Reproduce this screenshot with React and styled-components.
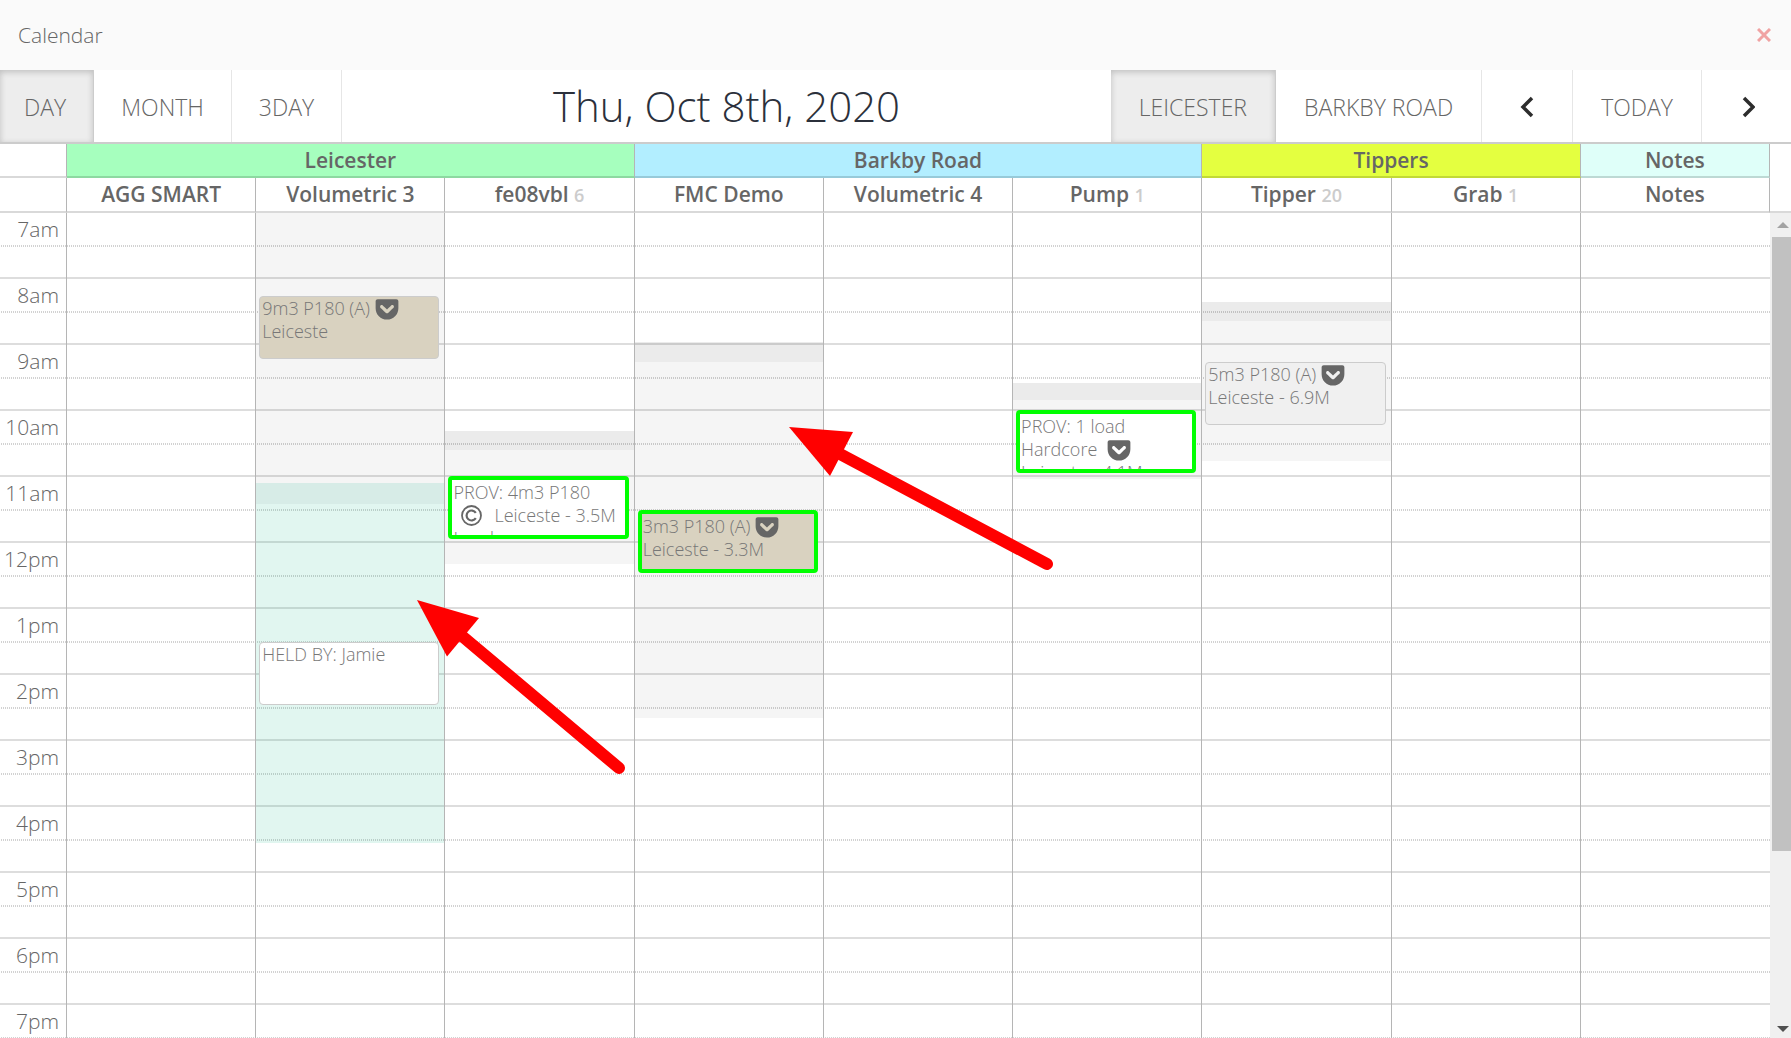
import React, { useState } from 'react';
import styled, { createGlobalStyle, css } from 'styled-components';
import { FaGetPocket } from 'react-icons/fa';

const GlobalStyle = createGlobalStyle`
  * {
    box-sizing: border-box;
  }

  body {
    margin: 0;
    background: #fff;
    color: #666;
    font-family: 'Open Sans', sans-serif;
    font-weight: 300;
  }

  button {
    font: inherit;
    color: inherit;
    cursor: pointer;
  }
`;

const Page = styled.div`
  position: relative;
  display: flex;
  flex-direction: column;
  height: 100vh;
  overflow: hidden;
`;

const TitleBar = styled.header`
  display: flex;
  align-items: center;
  justify-content: space-between;
  height: 70px;
  padding: 0 16px 0 18px;
  background: #fafafa;
  font-size: 21px;
`;

const CloseButton = styled.button`
  display: flex;
  padding: 4px;
  border: none;
  background: none;
  color: #f0a3a3;
`;

const Toolbar = styled.div`
  display: flex;
  height: 72px;
`;

const ToolButton = styled.button`
  display: flex;
  align-items: center;
  justify-content: center;
  min-width: ${props => props.$last ? '89px' : '91px'};
  padding: 2px 28px 0;
  border: none;
  border-right: ${props => props.$last ? 'none' : '1px solid #e6e6e6'};
  background: #fff;
  font-size: 23px;
  white-space: nowrap;

  ${props => props.$active && css`
    background: #ededed;
    border-right: 1px solid #ccc;
    box-shadow: inset 0 2px 6px rgba(0, 0, 0, 0.2);
  `}
`;

const ButtonGroup = styled.div`
  display: flex;
`;

const ViewButtons = styled(ButtonGroup)`
  ${ToolButton} {
    padding: 2px 27px 0;
  }

  ${ToolButton}:first-child {
    padding-left: 24px;
  }
`;

const DateTitle = styled.h1`
  flex: 1;
  margin: 0;
  color: #2b303b;
  font-size: 42px;
  font-weight: 300;
  line-height: 72px;
  text-align: center;
  white-space: nowrap;
`;

const HeaderRow = styled.div`
  display: grid;
  grid-template-columns: 67px repeat(9, 1fr) 21px;
  grid-auto-rows: ${props => props.$height}px;
`;

const GroupRow = styled(HeaderRow)`
  border-top: 2px solid #ccc;
`;

const HeaderCell = styled.div`
  grid-column: span ${props => props.$span || 1};
  border-right: 1px solid #b5b5b5;
  border-bottom: 2px solid rgba(0, 0, 0, 0.15);
  background: ${props => props.$color || '#fff'};
  font-size: 21px;
  font-weight: 600;
  line-height: 32px;
  text-align: center;
`;

const Corner = styled.div`
  border-bottom: ${props => props.$line ? '2px solid #d9d9d9' : 'none'};
`;

const Count = styled.span`
  color: #ccc;
  font-size: 18px;
`;

const Scroller = styled.div`
  display: grid;
  grid-template-columns: 1fr 21px;
  flex: 1;
  min-height: 0;
`;

const Schedule = styled.div`
  display: grid;
  align-items: start;
  overflow: hidden;
`;

const Rows = styled.div`
  grid-area: 1 / 1;
`;

const HourRow = styled.div`
  height: 66px;
  border-bottom: 2px solid #ddd;
`;

const HalfHour = styled.div`
  height: 34px;
  padding-bottom: 2px;
  background: repeating-linear-gradient(90deg, #fff 0 1px, #d2d2d2 1px 2px) bottom / 100% 2px no-repeat;
`;

const HourLabel = styled.div`
  width: 59px;
  font-size: 21px;
  line-height: 32px;
  text-align: right;
`;

const Columns = styled.div`
  grid-area: 1 / 1;
  display: grid;
  grid-template-columns: 67px repeat(9, 1fr);
  align-self: stretch;
`;

const Column = styled.div`
  position: relative;
  border-right: ${props => props.$last ? 'none' : '1px solid #b5b5b5'};
`;

const shades = {
  grey: 'rgba(0, 0, 0, 0.04)',
  dark: 'rgba(0, 0, 0, 0.08)',
  teal: 'rgba(26, 188, 140, 0.13)',
  tealDark: 'rgba(20, 140, 110, 0.17)'
};

const Shade = styled.div`
  position: absolute;
  left: 0;
  right: 0;
  background: ${props => shades[props.$kind]};
`;

const Event = styled.div`
  position: absolute;
  left: 3px;
  right: 5px;
  height: 63px;
  padding: ${props => props.$provisional ? '1px' : '0 2px'};
  overflow: hidden;
  border: ${props => props.$provisional ? '4px solid #0f0' : '1px solid #ccc'};
  border-radius: 4px;
  background: ${props => props.$color || '#fff'};
  color: #777;
  font-size: 18px;
  line-height: 23px;
`;

const EventLine = styled.div`
  display: flex;
  align-items: center;
  gap: ${props => props.$indent ? '12px' : '4px'};
  height: 23px;
  padding-left: ${props => props.$indent ? '8px' : '0'};
  white-space: pre;

  svg {
    flex: none;
    color: #666;
  }
`;

const Scrollbar = styled.div`
  display: flex;
  flex-direction: column;
  align-items: flex-end;
  justify-content: space-between;
  background: #f0f0f0;
`;

const ScrollArrow = styled.svg`
  display: block;
  width: 19px;
  height: 24px;
  fill: ${props => props.$dim ? '#a3a3a3' : '#505050'};
`;

const Track = styled.div`
  flex: 1;
  width: 19px;
`;

const Thumb = styled.div`
  height: 79%;
  background: #c1c1c1;
`;

const Arrows = styled.svg`
  position: absolute;
  top: 0;
  left: 0;
  width: 1791px;
  height: 1038px;
  pointer-events: none;
`;

const hours = ['7am', '8am', '9am', '10am', '11am', '12pm', '1pm', '2pm', '3pm', '4pm', '5pm', '6pm', '7pm'];

const groups = [
  { name: 'Leicester', span: 3, color: '#a6ffbe' },
  { name: 'Barkby Road', span: 3, color: '#b2eeff' },
  { name: 'Tippers', span: 2, color: '#e4ff40' },
  { name: 'Notes', span: 1, color: '#dffff9' }
];

// from / to / at are minutes after 7am
const resources = [
  { name: 'AGG SMART' },
  {
    name: 'Volumetric 3',
    shades: [
      { kind: 'grey', from: 0, to: 246 },
      { kind: 'tealDark', from: 246, to: 265 },
      { kind: 'teal', from: 265, to: 574 }
    ],
    events: [
      { at: 76, color: '#d9d2c0', lines: [{ text: '9m3 P180 (A)', pocket: true }, { text: 'Leiceste' }] },
      { at: 391, lines: [{ text: 'HELD BY: Jamie' }] }
    ]
  },
  {
    name: 'fe08vbl',
    count: 6,
    shades: [
      { kind: 'dark', from: 199, to: 216 },
      { kind: 'grey', from: 216, to: 320 }
    ],
    events: [
      {
        at: 240,
        provisional: true,
        lines: [{ text: 'PROV: 4m3 P180' }, { text: 'Leiceste - 3.5M', copyright: true }, { text: 'Lendmarc' }]
      }
    ]
  },
  {
    name: 'FMC Demo',
    shades: [
      { kind: 'dark', from: 118, to: 136 },
      { kind: 'grey', from: 136, to: 460 }
    ],
    events: [
      {
        at: 271,
        provisional: true,
        color: '#d9d2c0',
        lines: [{ text: '3m3 P180 (A)', pocket: true }, { text: 'Leiceste - 3.3M' }]
      }
    ]
  },
  { name: 'Volumetric 4' },
  {
    name: 'Pump',
    count: 1,
    shades: [
      { kind: 'dark', from: 155, to: 171 },
      { kind: 'grey', from: 171, to: 243 }
    ],
    events: [
      {
        at: 180,
        provisional: true,
        lines: [{ text: 'PROV: 1 load' }, { text: 'Hardcore ', pocket: true }, { text: 'Leiceste - 4.1M' }]
      }
    ]
  },
  {
    name: 'Tipper',
    count: 20,
    shades: [
      { kind: 'dark', from: 82, to: 99 },
      { kind: 'grey', from: 99, to: 226 }
    ],
    events: [
      { at: 136, color: '#f0f0f0', lines: [{ text: '5m3 P180 (A)', pocket: true }, { text: 'Leiceste - 6.9M' }] }
    ]
  },
  { name: 'Grab', count: 1 },
  { name: 'Notes' }
];

const toY = (minutes) => Math.max(0, Math.round(minutes * 1.1) - 1);

function Chevron({ flip }) {
  return (
    <svg width="16" height="24" viewBox="0 0 16 24" fill="none" stroke="#2d2d2d" strokeWidth="3.500">
      <path d={flip ? 'M5 3l9 9-9 9' : 'M13 3l-9 9 9 9'} />
    </svg>
  );
}

function CopyrightIcon() {
  return (
    <svg width="21" height="21" viewBox="0 0 21 21" fill="none" stroke="currentColor" strokeWidth="1.800">
      <circle cx="10.500" cy="10.500" r="9.500" />
      <path strokeWidth="2.200" d="M14.800 7.800A5 5 0 1 0 14.800 13.200" />
    </svg>
  );
}

function App() {
  const [view, setView] = useState('DAY');
  const [depot, setDepot] = useState('LEICESTER');

  return (
    <Page>
      <GlobalStyle />
      <TitleBar>
        <span>Calendar</span>
        <CloseButton aria-label="Close">
          <svg width="14" height="14" viewBox="0 0 14 14" fill="none" stroke="currentColor" strokeWidth="3">
            <path d="M1 1l12 12M13 1L1 13" />
          </svg>
        </CloseButton>
      </TitleBar>

      <Toolbar>
        <ViewButtons>
          {['DAY', 'MONTH', '3DAY'].map(name => (
            <ToolButton key={name} $active={view === name} onClick={() => setView(name)}>
              {name}
            </ToolButton>
          ))}
        </ViewButtons>
        <DateTitle>Thu, Oct 8th, 2020</DateTitle>
        <ButtonGroup>
          {['LEICESTER', 'BARKBY ROAD'].map(name => (
            <ToolButton key={name} $active={depot === name} onClick={() => setDepot(name)}>
              {name}
            </ToolButton>
          ))}
          <ToolButton aria-label="Previous day"><Chevron /></ToolButton>
          <ToolButton>TODAY</ToolButton>
          <ToolButton $last aria-label="Next day"><Chevron flip /></ToolButton>
        </ButtonGroup>
      </Toolbar>

      <GroupRow $height={34}>
        <HeaderCell />
        {groups.map(group => (
          <HeaderCell key={group.name} $span={group.span} $color={group.color}>
            {group.name}
          </HeaderCell>
        ))}
        <Corner />
      </GroupRow>
      <HeaderRow $height={35}>
        <HeaderCell />
        {resources.map(resource => (
          <HeaderCell key={resource.name}>
            {resource.name} {resource.count && <Count>{resource.count}</Count>}
          </HeaderCell>
        ))}
        <Corner $line />
      </HeaderRow>

      <Scroller>
        <Schedule>
          <Rows>
            {hours.map(hour => (
              <HourRow key={hour}>
                <HalfHour>
                  <HourLabel>{hour}</HourLabel>
                </HalfHour>
              </HourRow>
            ))}
          </Rows>
          <Columns>
            <Column />
            {resources.map((resource, i) => (
              <Column key={resource.name} $last={i === resources.length - 1}>
                {(resource.shades || []).map(shade => (
                  <Shade
                    key={shade.from}
                    $kind={shade.kind}
                    style={{ top: toY(shade.from), height: toY(shade.to) - toY(shade.from) }}
                  />
                ))}
                {(resource.events || []).map(event => (
                  <Event
                    key={event.at}
                    $provisional={event.provisional}
                    $color={event.color}
                    style={{ top: toY(event.at) }}
                  >
                    {event.lines.map(line => (
                      <EventLine key={line.text} $indent={line.copyright}>
                        {line.copyright && <CopyrightIcon />}
                        <span>{line.text}</span>
                        {line.pocket && <FaGetPocket size={26} />}
                      </EventLine>
                    ))}
                  </Event>
                ))}
              </Column>
            ))}
          </Columns>
        </Schedule>
        <Scrollbar>
          <ScrollArrow $dim viewBox="0 0 19 24"><path d="M5 15h12l-6-6z" /></ScrollArrow>
          <Track>
            <Thumb />
          </Track>
          <ScrollArrow viewBox="0 0 19 24"><path d="M5 12h12l-6 6z" /></ScrollArrow>
        </Scrollbar>
      </Scroller>

      <Arrows viewBox="0 0 1791 1038" fill="#f00" stroke="#f00">
        <path stroke="none" d="M417 600l62 18-32 38.500z" />
        <path strokeWidth="12" strokeLinecap="round" d="M462 636L619 768" />
        <path stroke="none" d="M789 427l64 5-23 44z" />
        <path strokeWidth="12" strokeLinecap="round" d="M840 454L1047 564" />
      </Arrows>
    </Page>
  );
}

export default App;
